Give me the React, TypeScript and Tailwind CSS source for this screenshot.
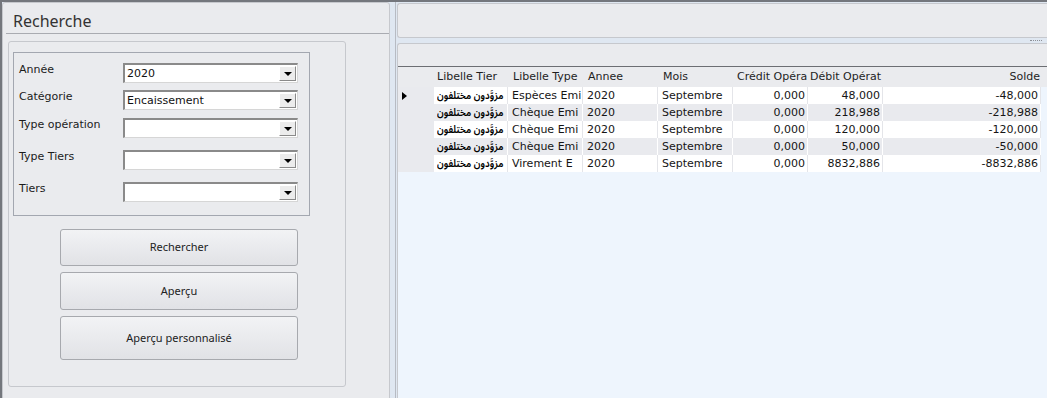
import React from "react";
import clsx from "clsx";

const AR = "مزوَّدون مختلفون";

function Combo({ value, className }: { value?: string; className?: string }) {
  return (
    <div
      className={clsx(
        "w-[175px] h-[20px] flex items-center bg-white border-t-2 border-l-2 border-r border-b border-t-[#8a8a8a] border-l-[#8a8a8a] border-r-[#d6d6d6] border-b-[#d6d6d6]",
        className
      )}
    >
      <div className="flex-1 pl-[2px] leading-[17px] text-[11px] text-[#111] whitespace-nowrap overflow-hidden">
        {value}
      </div>
      <div className="w-[17px] h-[15px] mr-[1px] flex items-center justify-center bg-[#ececec] border-t border-l border-r border-b border-t-white border-l-white border-r-[#8a8a8a] border-b-[#8a8a8a]">
        <div className="w-0 h-0 border-x-[4px] border-x-transparent border-t-[4px] border-t-black" />
      </div>
    </div>
  );
}

function Field({ label, value, mt }: { label: string; value?: string; mt: string }) {
  return (
    <div className={clsx("flex items-start", mt)}>
      <div className="w-[104px] text-[11px] leading-[13px] text-[#1b1b1b] whitespace-nowrap">{label}</div>
      <Combo value={value} />
    </div>
  );
}

function Btn({ label, h, mt }: { label: string; h: string; mt: string }) {
  return (
    <div
      className={clsx(
        "ml-[51px] w-[238px] flex items-center justify-center rounded-[3px] border border-[#a7a9ae] bg-linear-to-b from-[#f2f3f5] to-[#e1e2e6] text-[11px] text-[#222] font-['Noto_Sans',sans-serif]",
        h,
        mt
      )}
    >
      {label}
    </div>
  );
}

type RowProps = {
  type: string;
  debit: string;
  solde: string;
  alt?: boolean;
  current?: boolean;
};

function Row({ type, debit, solde, alt, current }: RowProps) {
  const bg = alt ? "bg-[#e9eaee]" : "bg-white";
  const sep = alt ? "border-r-white" : "border-r-[#e4e5e9]";
  const cell = "shrink-0 overflow-hidden whitespace-nowrap leading-[17px] h-[17px] border-r";
  return (
    <div className="flex h-[17px] text-[11px] text-[#151515]">
      <div className="w-[36px] shrink-0 bg-[#e9eaee] flex items-center pl-[4px]">
        {current && (
          <div className="w-0 h-0 border-y-[4px] border-y-transparent border-l-[5px] border-l-black" />
        )}
      </div>
      <div className={clsx(cell, bg, sep, "w-[74px] pl-[3px] text-black")}>
        <span
          dir="rtl"
          className="inline-block align-top h-[17px] leading-[17px] origin-left scale-x-[0.85] text-[11px] font-semibold font-['Noto_Sans_Arabic','Noto_Naskh_Arabic','DejaVu_Sans',sans-serif]"
        >
          {AR}
        </span>
      </div>
      <div className={clsx(cell, bg, sep, "w-[75px] pl-[4px]")}>{type}</div>
      <div className={clsx(cell, bg, sep, "w-[75px] pl-[4px]")}>2020</div>
      <div className={clsx(cell, bg, sep, "w-[75px] pl-[4px]")}>Septembre</div>
      <div className={clsx(cell, bg, sep, "w-[75px] pr-[2px] text-right")}>0,000</div>
      <div className={clsx(cell, bg, sep, "w-[75px] pr-[2px] text-right")}>{debit}</div>
      <div className={clsx(cell, bg, sep, "w-[158px] pr-[2px] text-right")}>{solde}</div>
    </div>
  );
}

export default function App() {
  return (
    <div className="w-[1047px] h-[398px] overflow-hidden bg-[#dfe7f1] border-t-2 border-l-2 border-[#74777d] flex font-['DejaVu_Sans',sans-serif]">
      {/* Left panel */}
      <div className="w-[388px] h-[400px] shrink-0 bg-[#eaebee] border border-[#c6c8cd] rounded-[3px] flex flex-col">
        <div className="ml-[3px] h-[31px] border-b border-[#a9abb1] pl-[7px] pt-[8px] leading-[21px] text-[16px] text-[#333] font-['Noto_Sans',sans-serif]">
          Recherche
        </div>
        <div className="ml-[5px] mt-[7px] w-[338px] h-[346px] border border-[#c6c8cd] rounded-[3px] flex flex-col">
          <div className="ml-[4px] mt-[10px] w-[297px] h-[164px] border border-[#a3a7b0] pl-[5px] pt-[10px]">
            <Field label="Année" value="2020" mt="mt-0" />
            <Field label="Catégorie" value="Encaissement" mt="mt-[7px]" />
            <Field label="Type opération" mt="mt-[8px]" />
            <Field label="Type Tiers" mt="mt-[12px]" />
            <Field label="Tiers" mt="mt-[12px]" />
          </div>
          <Btn label="Rechercher" h="h-[37px]" mt="mt-[13px]" />
          <Btn label="Aperçu" h="h-[38px]" mt="mt-[6px]" />
          <Btn label="Aperçu personnalisé" h="h-[44px]" mt="mt-[6px]" />
        </div>
      </div>

      {/* Right side */}
      <div className="flex-1 pl-[5px] flex">
        <div className="flex-1 border-l border-[#b7bbc3] pl-[1px] flex flex-col">
          <div className="mt-[1px] h-[35px] bg-[#eaebee] border-y border-l border-[#c6c8cd] rounded-l-[3px]" />
          <div className="h-[5px] flex items-center justify-end pr-[5px]">
            <div className="w-[12px] h-0 border-t border-dotted border-[#8d9096]" />
          </div>
          <div className="flex-1 bg-[#eaebee] border-t border-l border-[#c6c8cd] rounded-tl-[3px] flex flex-col">
            <div className="h-[22px]" />
            <div className="flex-1 border-t border-[#6c6e73] bg-[#eef5fd] flex flex-col">
              <div className="flex h-[20px] bg-[#eaebee] text-[11px] text-[#1e1e1e] leading-[20px]">
                <div className="w-[36px] shrink-0" />
                <div className="w-[74px] shrink-0 pl-[3px] whitespace-nowrap overflow-hidden">Libelle Tier</div>
                <div className="w-[75px] shrink-0 pl-[5px] whitespace-nowrap overflow-hidden">Libelle Type</div>
                <div className="w-[75px] shrink-0 pl-[5px] whitespace-nowrap overflow-hidden">Annee</div>
                <div className="w-[75px] shrink-0 pl-[5px] whitespace-nowrap overflow-hidden">Mois</div>
                <div className="w-[75px] shrink-0 pl-[4px] whitespace-nowrap overflow-hidden">Crédit Opéra</div>
                <div className="w-[75px] shrink-0 pl-[2px] whitespace-nowrap overflow-hidden">Débit Opérat</div>
                <div className="w-[158px] shrink-0 pr-[1px] text-right whitespace-nowrap overflow-hidden">Solde</div>
              </div>
              <Row type="Espèces Emi" debit="48,000" solde="-48,000" current />
              <Row type="Chèque Emi" debit="218,988" solde="-218,988" alt />
              <Row type="Chèque Emi" debit="120,000" solde="-120,000" />
              <Row type="Chèque Emi" debit="50,000" solde="-50,000" alt />
              <Row type="Virement E" debit="8832,886" solde="-8832,886" />
            </div>
          </div>
        </div>
      </div>
    </div>
  );
}
